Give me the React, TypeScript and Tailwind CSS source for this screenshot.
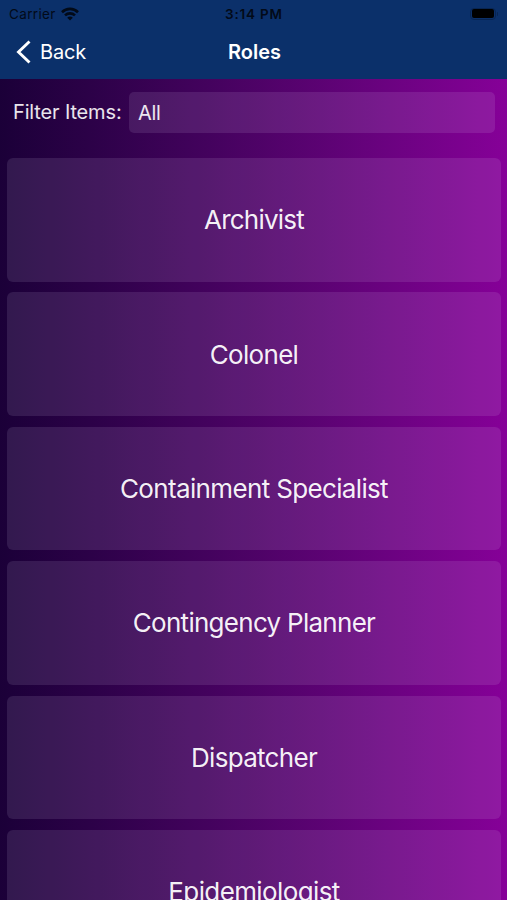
const roles = [
  { name: "Archivist", tracking: "tracking-[-0.8px]" },
  { name: "Colonel", tracking: "tracking-[-0.7px]" },
  { name: "Containment Specialist", tracking: "tracking-[-0.65px]" },
  { name: "Contingency Planner", tracking: "tracking-[-0.72px]" },
  { name: "Dispatcher", tracking: "tracking-[-0.7px]" },
  { name: "Epidemiologist", tracking: "tracking-[-0.62px]" },
];

function StatusBar() {
  return (
    <div className="grid h-[27px] grid-cols-3 items-center px-[9px] text-[13.5px] leading-none text-[#020a18]">
      <div className="flex items-center gap-[5px]">
        <span className="pt-[2px] tracking-[0.35px]">Carrier</span>
        <svg width="18" height="14" viewBox="0 0 18 14" fill="none" stroke="#020a18" strokeWidth="2.6">
          <path d="M1 5.2C5.5.8 12.5.8 17 5.2" />
          <path d="M4 8.4c2.8-2.7 7.2-2.7 10 0" />
          <path d="M6.2 10.7c1.6-1.5 4-1.5 5.6 0L9 13.6z" fill="#020a18" stroke="none" />
        </svg>
      </div>
      <span className="pt-[2px] pl-px text-center font-semibold tracking-[0.8px]">3:14 PM</span>
      <div className="flex items-center justify-end">
        <span className="flex h-[12px] w-[26px] items-center justify-center rounded-[4px] border border-[#082552]">
          <span className="h-[9px] w-[22px] rounded-[2px] bg-black" />
        </span>
        <span className="ml-px h-[4px] w-[1.5px] rounded-r bg-[#082552]" />
      </div>
    </div>
  );
}

function NavBar() {
  return (
    <div className="grid h-[50px] grid-cols-3 items-center px-[16px] text-[20px] leading-none text-white">
      <div className="flex items-center gap-[9px]">
        <svg width="15" height="24" viewBox="0 0 15 24" fill="none" stroke="white" strokeWidth="2.9">
          <path d="M13.5 1.5L2.5 12l11 10.5" />
        </svg>
        <span className="tracking-[-0.2px]">Back</span>
      </div>
      <h1 className="pl-[2px] text-center font-semibold tracking-[-0.05px]">Roles</h1>
    </div>
  );
}

export default function App() {
  return (
    <div className="flex h-[900px] w-[507px] flex-col overflow-hidden bg-linear-to-r from-[#1b0038] to-[#860098] font-['Inter','Liberation_Sans',sans-serif]">
      <header className="h-[79px] shrink-0 bg-[#0b306a]">
        <StatusBar />
        <NavBar />
      </header>
      <div className="mt-[13px] flex h-[41px] shrink-0 items-center pr-[12px] pl-[13px] text-[20px] text-white/90">
        <label className="w-[116px] shrink-0 pb-[2px] whitespace-nowrap tracking-[-0.15px]">Filter Items:</label>
        <div className="flex h-full flex-1 items-center rounded-[5px] bg-[#f0e8ff]/11 px-[9px] tracking-[-0.3px]">All</div>
      </div>
      <main className="mt-[25px] flex flex-col gap-[10.9px] pr-[6px] pl-[7px]">
        {roles.map((role) => (
          <button
            key={role.name}
            className="flex h-[123.5px] shrink-0 items-center justify-center rounded-[6px] bg-[#f0e8ff]/11 text-[26px] text-white/95"
          >
            <span className={role.tracking}>{role.name}</span>
          </button>
        ))}
      </main>
    </div>
  );
}
